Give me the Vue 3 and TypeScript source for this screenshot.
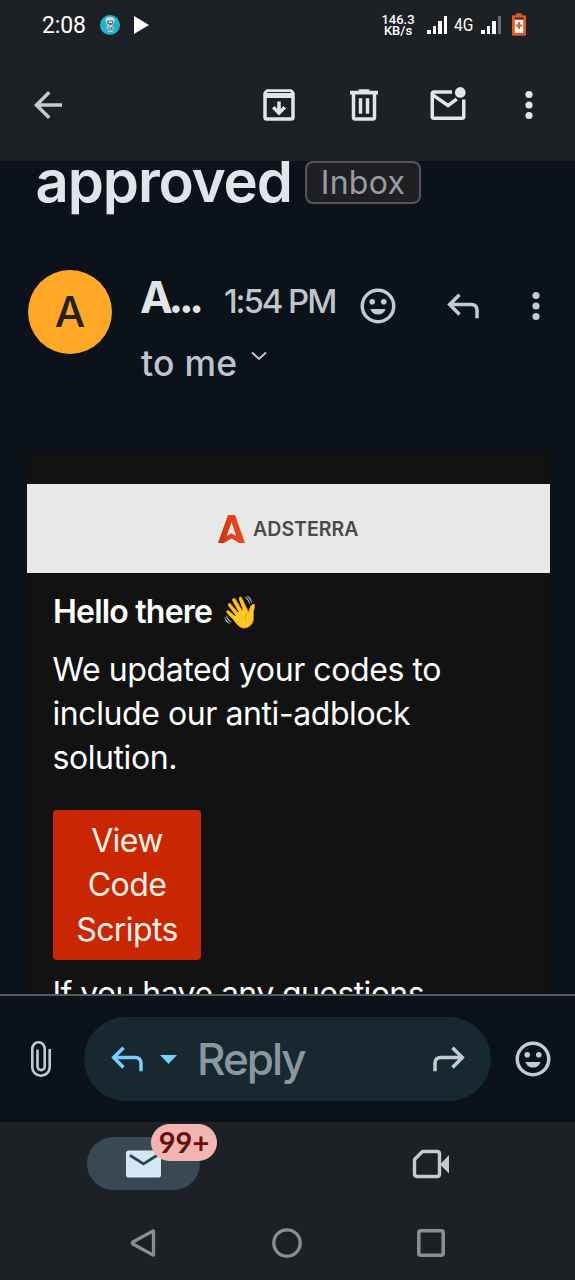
<script setup lang="ts">
interface Bar { height: number; dim?: boolean }

const fullSignal: Bar[] = [{ height: 4 }, { height: 8 }, { height: 13 }, { height: 18 }]
const weakSignal: Bar[] = [{ height: 4 }, { height: 8 }, { height: 13 }, { height: 18, dim: true }]
const bodyLines: string[] = ['We updated your codes to', 'include our anti-adblock', 'solution.']
const buttonLines: string[] = ['View', 'Code', 'Scripts']
</script>

<template>
  <div class="screen">
    <header class="top">
      <div class="status">
        <span class="clock">2:08</span>
        <svg class="app-dot" viewBox="0 0 20 20">
          <circle cx="10" cy="10" r="10" fill="#1fb3c8" />
          <path d="M5.5 5.2Q6 2.2 10 2.1q4.500 0 5 3.600l-1.200 2.800-1.800 2.500H8L6.500 8.500z" fill="#c9dde2" />
          <path d="M7 5.500h6.500l-.7 3.800-2.300 1L7.500 9z" fill="#56727c" />
          <path d="M9 6.500h3v1.500H9z" fill="#e3eef0" />
          <path d="M6.500 11.500l3-1 4 1 .8 2.500-1.800.3.500 3.200-2.500-.8-3 .6.5-3-1.800-1z" fill="#a9c8d0" />
          <path d="M8.500 12l1.500 1.500-1 2m3-3.500l-.5 3" stroke="#44616c" fill="none" />
        </svg>
        <svg class="play" viewBox="0 0 15 18"><path d="M0 0L15 9 0 18z" fill="#fff" /></svg>
        <span class="spacer" />
        <span class="speed"><span>146.3</span><span>KB/s</span></span>
        <span class="bars first">
          <i v-for="(b, i) in fullSignal" :key="i" :class="['bar', { dim: b.dim }]" :style="{ height: b.height + 'px' }" />
        </span>
        <span class="net">4G</span>
        <span class="bars second">
          <i v-for="(b, i) in weakSignal" :key="i" :class="['bar', { dim: b.dim }]" :style="{ height: b.height + 'px' }" />
        </span>
        <svg class="battery" viewBox="0 0 15 24">
          <path d="M4.500 0h6v2H14q1 0 1 1v20q0 1-1 1H1q-1 0-1-1V3q0-1 1-1h3.500z" fill="#dc5a2c" />
          <path d="M3 4.500h9v2H3z" fill="#4c241c" />
          <path d="M3 7h9v14H3z" fill="#fff4ee" />
          <path d="M7.500 9.500v7M4 13h7" stroke="#dc5a2c" stroke-width="2.200" />
        </svg>
      </div>
      <div class="toolbar">
        <svg class="ic back" viewBox="0 0 24 24"><path d="M20 11H7.830l5.590-5.590L12 4l-8 8 8 8 1.410-1.410L7.830 13H20z" fill="currentColor" /></svg>
        <span class="spacer" />
        <svg class="ic archive" viewBox="0 0 24 24">
          <path fill="currentColor" fill-rule="evenodd" d="M5.200 3h13.600q.6 0 .9.400l1 1.300q.3.400.3.900V19q0 2-2 2H5q-2 0-2-2V5.600q0-.5.300-.9l1-1.300q.3-.4.900-.4zM5.600 4.500L5 5.200h14l-.6-.7zM5 8v11h14V8z" />
          <path fill="currentColor" d="M11 10h2v4.200l1.600-1.600L16 14l-4 4-4-4 1.400-1.400 1.600 1.600z" />
        </svg>
        <svg class="ic trash" viewBox="0 0 24 24">
          <path fill="currentColor" fill-rule="evenodd" d="M9 3h6v.8h5V6h-1v13q0 2-2 2H7q-2 0-2-2V6H4V3.800h5zM7 6v13h10V6z" />
          <path d="M10 8.200v8.800M14 8.200v8.800" stroke="currentColor" stroke-width="2" />
        </svg>
        <svg class="ic unread" viewBox="0 0 24 24">
          <path d="M14.300 4.500H4q-1 0-1 1V18.500q0 1 1 1h16q1 0 1-1V8.900M3.300 6.200L12 12.300l5-3.700" fill="none" stroke="currentColor" stroke-width="2" />
          <circle cx="19" cy="4.800" r="3.050" fill="currentColor" />
        </svg>
        <svg class="ic more" viewBox="0 0 24 24"><g fill="currentColor"><circle cx="12" cy="6" r="2.050" /><circle cx="12" cy="12" r="2.050" /><circle cx="12" cy="18" r="2.050" /></g></svg>
      </div>
    </header>

    <main class="thread">
      <div class="subject">
        <h1 class="title">approved</h1>
        <span class="chip"><span>Inbox</span></span>
      </div>

      <section class="sender">
        <div class="avatar">A</div>
        <div class="meta">
          <div class="who"><strong class="name">A...</strong><span class="time">1:54 PM</span></div>
          <div class="to"><span>to me</span>
            <svg class="chev" viewBox="0 0 16 10"><path d="M1 1.500l7 6.500 7-6.500" fill="none" stroke="currentColor" stroke-width="2" /></svg>
          </div>
        </div>
        <div class="actions">
          <svg class="ic" viewBox="0 0 24 24">
            <circle cx="12" cy="12" r="9" fill="none" stroke="currentColor" stroke-width="2" />
            <circle cx="8.700" cy="9.600" r="1.600" fill="currentColor" /><circle cx="15.300" cy="9.600" r="1.600" fill="currentColor" />
            <path d="M7.600 13.700h8.800q-1.200 3.200-4.400 3.200t-4.400-3.200z" fill="currentColor" />
          </svg>
          <svg class="ic reply" viewBox="0 0 24 24"><path d="M10 5.600L4.400 11.200l5.600 5.600M4.600 11.200h12q3.400 0 3.400 3.400V19" fill="none" stroke="currentColor" stroke-width="2" /></svg>
          <svg class="ic kebab" viewBox="0 0 24 24"><g fill="currentColor"><circle cx="12" cy="6" r="2.050" /><circle cx="12" cy="12" r="2.050" /><circle cx="12" cy="18" r="2.050" /></g></svg>
        </div>
      </section>

      <article class="mail">
        <div class="brand">
          <svg class="mark" viewBox="0 0 27 28">
            <defs><linearGradient id="flame" x1="0" x2="1" y1="0" y2="0"><stop offset="0" stop-color="#c9301a" /><stop offset=".5" stop-color="#e2421a" /><stop offset="1" stop-color="#ee4818" /></linearGradient></defs>
            <path fill="url(#flame)" fill-rule="evenodd" d="M10 0h7l10 28h-6l-7.500-4.500L6 28H0zM13.500 7L8.800 21l4.700-2.800 4.700 2.800z" />
          </svg>
          <span class="word">ADSTERRA</span>
        </div>
        <h2 class="hello"><span class="hi">Hello there</span><span class="wave">👋</span></h2>
        <p class="copy"><span v-for="l in bodyLines" :key="l">{{ l }}</span></p>
        <a class="cta"><span v-for="l in buttonLines" :key="l">{{ l }}</span></a>
        <p class="cut">If you have any questions</p>
      </article>
    </main>

    <section class="compose">
      <svg class="clip" viewBox="0 0 20 36"><path d="M18.700 8v18.500a8.700 8.200 0 0 1-17.400 0V7.700a6.200 6.400 0 0 1 12.400 0v17.800a3.600 3.600 0 0 1-7.200 0V8.500" fill="none" stroke="currentColor" stroke-width="2.600" /></svg>
      <div class="field">
        <svg class="ic blue" viewBox="0 0 24 24"><path d="M10 5.600L4.400 11.200l5.600 5.600M4.600 11.200h12q3.400 0 3.400 3.400V19" fill="none" stroke="currentColor" stroke-width="2" /></svg>
        <svg class="caret" viewBox="0 0 17 9"><path d="M0 0h17L8.500 9z" fill="#78d0ff" /></svg>
        <span class="hint">Reply</span>
        <svg class="ic fwd" viewBox="0 0 24 24"><path d="M14 5.600l5.600 5.600-5.600 5.600M19.400 11.200h-12Q4 11.200 4 14.600V19" fill="none" stroke="currentColor" stroke-width="2" /></svg>
      </div>
      <svg class="ic smile" viewBox="0 0 24 24">
        <circle cx="12" cy="12" r="9" fill="none" stroke="currentColor" stroke-width="2" />
        <circle cx="8.700" cy="9.600" r="1.600" fill="currentColor" /><circle cx="15.300" cy="9.600" r="1.600" fill="currentColor" />
        <path d="M7.600 13.700h8.800q-1.200 3.200-4.400 3.200t-4.400-3.200z" fill="currentColor" />
      </svg>
    </section>

    <footer class="bottom">
      <nav class="tabs">
        <div class="tab active">
          <svg class="env" viewBox="0 0 36 28"><rect width="36" height="28" rx="3" fill="#d3e7f7" /><path d="M4 5l14 9 14-9" fill="none" stroke="#34434e" stroke-width="2.800" /></svg>
          <span class="badge"><span>99+</span></span>
        </div>
        <svg class="meet" viewBox="0 0 36 28">
          <path d="M9.500 1.500H24q2.500 0 2.500 2.500v20q0 2.500-2.500 2.500H4Q1.500 26.500 1.500 24V9.500z" fill="none" stroke="currentColor" stroke-width="3.400" stroke-linejoin="round" />
          <path d="M27 14.500L36 5v18.500z" fill="currentColor" />
        </svg>
      </nav>
      <div class="system">
        <svg class="sys tri" viewBox="0 0 28 28"><path d="M23.500 2.500v23q0 .8-.8.4L3 15q-1.300-1 0-2L22.700 2.100q.8-.4.8.4z" fill="none" stroke="currentColor" stroke-width="3.300" /></svg>
        <svg class="sys" viewBox="0 0 30 30"><circle cx="15" cy="15" r="13.200" fill="none" stroke="currentColor" stroke-width="3.300" /></svg>
        <svg class="sys sq" viewBox="0 0 28 28"><rect x="1.800" y="1.800" width="24.400" height="24.400" rx="2" fill="none" stroke="currentColor" stroke-width="3.600" /></svg>
      </div>
    </footer>
  </div>
</template>

<style>
body { background: #0b1219; }
</style>

<style scoped>
* { box-sizing: border-box; }
.screen { width: 575px; height: 1280px; overflow: hidden; display: flex; flex-direction: column; background: #0b1219; font-family: Inter, "Liberation Sans", sans-serif; color: #e1e4e9; }
svg { display: block; flex: none; overflow: visible; }
.spacer { flex: 1; }
.ic { width: 42px; height: 42px; }

.top { height: 161px; flex: none; background: #1d2125; }
.status { height: 49px; padding: 0 49px 0 42px; display: flex; align-items: center; color: #fff; font-family: Roboto, sans-serif; }
.clock { font-size: 23px; line-height: 24px; width: 58px; letter-spacing: -.1px; padding-top: 2px; }
.app-dot { width: 20px; height: 20px; }
.play { width: 15px; height: 18px; margin-left: 14px; }
.speed { display: flex; flex-direction: column; align-items: center; font-size: 13px; line-height: 11px; font-weight: 500; width: 34px; white-space: nowrap; }
.bars { display: flex; align-items: flex-end; gap: 2px; height: 18px; }
.first { margin-left: 12px; }
.second { margin-left: 7px; }
.bar { width: 3.500px; background: #fff; }
.bar.dim { background: #686c70; }
.net { display: block; width: 20px; margin-left: 7px; font-size: 19px; line-height: 20px; transform: scaleX(.82); transform-origin: left; }
.battery { width: 14px; height: 23px; margin-left: 11px; }

.toolbar { height: 112px; display: flex; align-items: center; padding: 0 25px 0 27px; color: #e1e4e8; }
.back { color: #c6c9cd; }
.trash { margin-left: 43px; }
.unread { margin-left: 42px; }
.more { margin-left: 39px; }

.thread { height: 833px; flex: none; overflow: hidden; display: flex; flex-direction: column; }
.subject { height: 109px; display: flex; align-items: flex-start; flex: none; }
.title { margin: -20px 0 0 35.500px; width: 269.500px; font-size: 58px; line-height: 80px; font-weight: 600; letter-spacing: -1.100px; white-space: nowrap; }
.chip { height: 43px; width: 116px; border: 2px solid #56555b; border-radius: 8px; background: #201f24; color: #9b9ca1; font-size: 32px; line-height: 40px; letter-spacing: .3px; display: flex; justify-content: center; }
.sender { display: flex; flex: none; height: 182px; padding-left: 28px; }
.avatar { margin-top: .4px; width: 84px; height: 84px; border-radius: 50%; background: #ffa827; color: #24221f; font-size: 43px; line-height: 82px; text-align: center; font-weight: 500; }
.meta { margin-left: 28px; width: 217px; }
.who { display: flex; height: 60px; align-items: baseline; white-space: nowrap; }
.name { width: 84px; font-size: 44px; line-height: 54px; font-weight: 700; letter-spacing: -4.300px; }
.time { color: #bfc4cd; font-size: 33px; font-weight: 500; letter-spacing: -2.100px; }
.to { display: flex; color: #bfc4cd; font-size: 35.500px; line-height: 68px; font-weight: 500; letter-spacing: .3px; padding-left: 1px; }
.chev { width: 16px; height: 10px; margin: 21px 0 0 13px; }
.actions { display: flex; height: 72px; align-items: center; color: #c3cad5; }
.reply { margin-left: 43px; }
.kebab { margin-left: 31px; }

.mail { margin: 0 25px 0 26.500px; flex: 1 0 542px; padding-top: 32px; background: #121212; color: #fff; display: flex; flex-direction: column; }
.brand { height: 89px; flex: none; background: #e8e8e8; display: flex; align-items: center; justify-content: center; gap: 8px; }
.mark { width: 27px; height: 28px; }
.word { color: #4a4a4c; font-size: 19.500px; font-weight: 600; }
.hello { margin: 16px 0 0 26.500px; height: 46px; display: flex; font-size: 32px; line-height: 46px; font-weight: 600; }
.hi { letter-spacing: -.8px; width: 168px; white-space: nowrap; }
.wave { font-size: 31.500px; line-height: 46px; font-weight: 400; }
.copy { margin: 12.500px 0 0 26px; display: flex; flex-direction: column; font-size: 32px; line-height: 44px; letter-spacing: -.42px; }
.cta { margin: 30.500px 0 0 26.500px; width: 148px; height: 150px; flex: none; border-radius: 4px; background: #c92704; color: #fff0e6; padding-top: 9px; display: flex; flex-direction: column; align-items: center; font-size: 32px; line-height: 44.400px; letter-spacing: -.6px; }
.cut { margin: 12px 0 0 26px; font-size: 32px; line-height: 44px; letter-spacing: -.58px; white-space: nowrap; }

.compose { height: 128px; flex: none; border-top: 2px solid #565b5e; display: flex; align-items: center; padding: 0 21px 0 31px; color: #c3cad3; }
.clip { width: 20px; height: 36px; }
.field { height: 84px; width: 407px; margin-left: 33px; border-radius: 42px; background: #182830; display: flex; align-items: center; padding-left: 21.500px; }
.blue { color: #78d0ff; }
.caret { width: 17px; height: 9px; margin-left: 12.500px; }
.hint { width: 128px; margin-left: 20px; color: #8b979f; font-size: 44px; line-height: 60px; font-weight: 500; letter-spacing: -2px; }
.fwd { margin-left: 102.500px; }
.smile { margin-left: 20.500px; }

.bottom { flex: 1; background: #1d2125; }
.tabs { height: 83px; display: flex; align-items: center; padding-left: 87px; }
.tab { position: relative; width: 113px; height: 53px; border-radius: 27px; background: #394853; display: flex; align-items: center; justify-content: center; }
.env { width: 35px; height: 28px; }
.badge { position: absolute; left: 64px; top: -13px; width: 66px; height: 37px; border-radius: 19px; background: #f3b5b4; color: #65120f; font: 700 29px/35px Lato, sans-serif; text-align: center; }
.meet { width: 36px; height: 28px; margin-left: 213px; color: #c6cacf; }
.system { height: 76px; display: flex; align-items: center; color: #8b8d91; padding-left: 130px; }
.sys { width: 30px; height: 30px; }
.tri { width: 28px; height: 28px; margin-right: 114px; }
.sq { width: 28px; height: 28px; margin-left: 115px; }
</style>
